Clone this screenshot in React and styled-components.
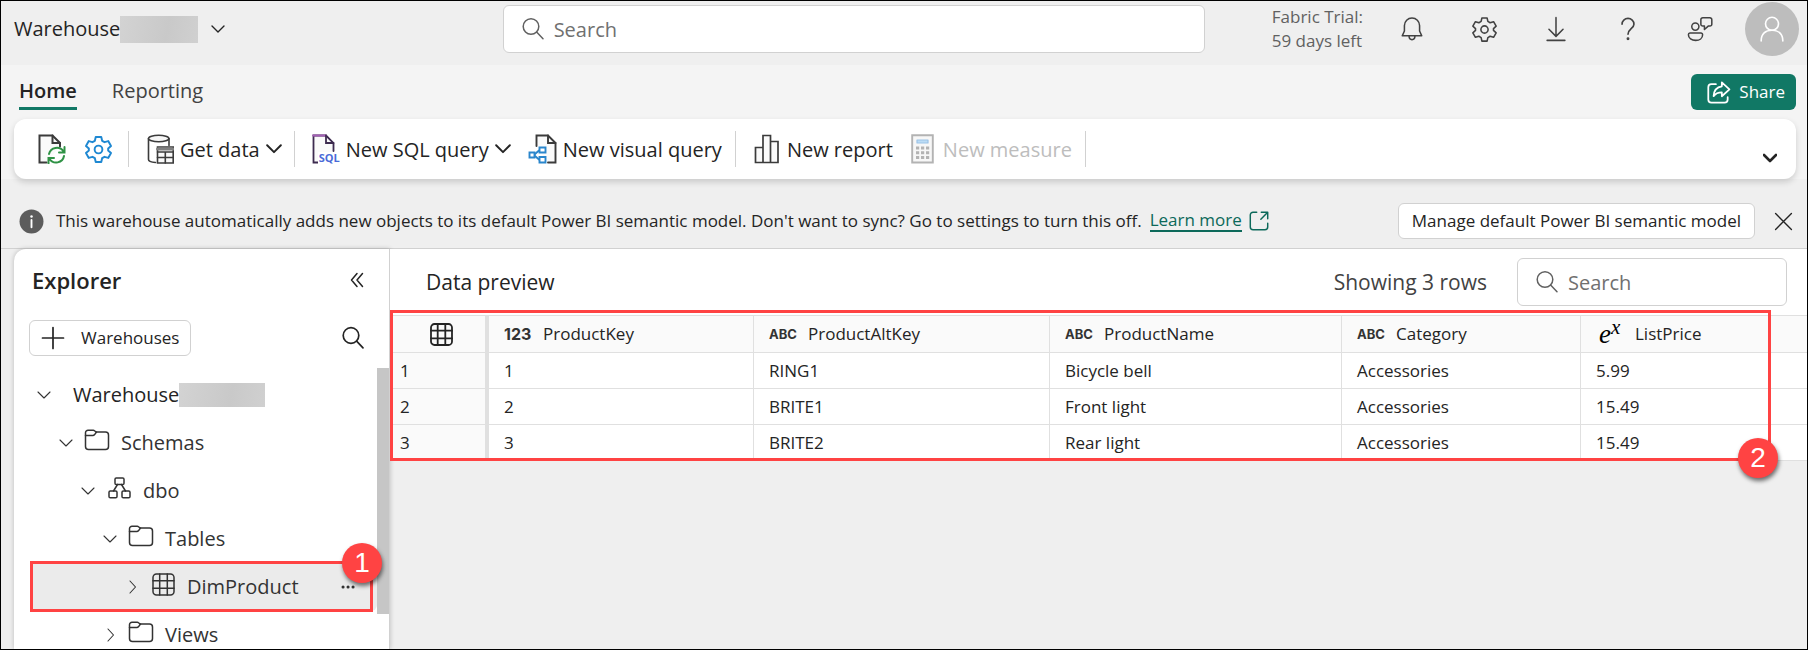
import React from "react";
import styled, { createGlobalStyle, css } from "styled-components";

const GlobalStyle = createGlobalStyle`
  *, *::before, *::after { box-sizing: border-box; }
  body {
    margin: 0;
    background: #efefef;
    color: #242424;
    font-family: "Open Sans", "Noto Sans", sans-serif;
    font-size: 17px;
    line-height: 24px;
  }
  button, input { font: inherit; color: inherit; }
  button { background: none; border: 0; padding: 0; margin: 0; white-space: nowrap; }
  ul { list-style: none; margin: 0; padding: 0; }
  svg { display: block; flex: none; }
`;

const Page = styled.div`
  display: flex;
  flex-direction: column;
  height: 100vh;
  border: 1px solid #000;
  overflow: hidden;
  background: #efefef;
`;

/* ---------- top bar ---------- */

const TopBar = styled.header`
  display: grid;
  grid-template-columns: 5fr 7fr 6fr;
  align-items: center;
  flex: none;
  padding: 1px 0 9px;
`;

const WorkspaceButton = styled.button`
  display: flex;
  align-items: center;
  justify-self: start;
  margin-left: 13px;
  font-size: 20px;
  line-height: 28px;
`;

const Redacted = styled.span`
  width: ${(p) => p.$width}px;
  height: ${(p) => p.$height}px;
  margin-right: 13px;
  background: linear-gradient(100deg, #d3d3d3, #c9c9c9 60%, #d0d0d0);
`;

const SearchBox = styled.label`
  display: flex;
  align-items: center;
  gap: 9px;
  height: 48px;
  width: ${(p) => p.$width};
  padding: 0 17px;
  background: #fff;
  border: 1px solid #d1d1d1;
  border-radius: 6px;
  color: #616161;

  input {
    flex: 1;
    min-width: 0;
    border: 0;
    padding: 2px 0 0;
    outline: 0;
    background: transparent;
    font-size: 20px;
  }
  input::placeholder { color: #707070; opacity: 1; }
`;

const TopActions = styled.div`
  display: flex;
  align-items: center;
  justify-content: flex-end;
  padding-right: 8px;
`;

const Trial = styled.div`
  margin-right: 13px;
  color: #616161;
  line-height: 24px;
  white-space: nowrap;
`;

const TopIcon = styled.button`
  display: flex;
  justify-content: center;
  width: 72px;
  color: #424242;
`;

const Avatar = styled.button`
  display: flex;
  align-items: center;
  justify-content: center;
  width: 54px;
  height: 54px;
  margin-left: 9px;
  border-radius: 50%;
  background: #bdbdbd;
  color: #fff;
`;

/* ---------- ribbon ---------- */

const Ribbon = styled.section`
  flex: none;
  padding: 0 11px 0 13px;
  background: #f4f4f4;
`;

const TabRow = styled.nav`
  display: flex;
  align-items: flex-start;
  height: 54px;
  padding: 9px 0 0 5px;
`;

const Tab = styled.button`
  height: 36px;
  margin-right: 35px;
  color: ${(p) => (p.$active ? "#242424" : "#424242")};
  font-size: 20px;
  font-weight: ${(p) => (p.$active ? 600 : 400)};
  line-height: 30px;
  border-bottom: 3px solid ${(p) => (p.$active ? "#117865" : "transparent")};
`;

const ShareButton = styled.button`
  display: flex;
  align-items: center;
  gap: 8px;
  height: 36px;
  margin-left: auto;
  padding: 0 11px 0 15px;
  border-radius: 6px;
  background: #117865;
  color: #fff;
`;

const Toolbar = styled.div`
  display: flex;
  align-items: center;
  height: 60px;
  padding: 0 19px 0 24px;
  background: #fff;
  border-radius: 12px;
  box-shadow: 0 3px 6px rgba(0, 0, 0, 0.16);
`;

const Tool = styled.button`
  display: flex;
  align-items: center;
  gap: ${(p) => p.$gap || 6}px;
  margin-right: ${(p) => p.$after}px;
  font-size: 20px;
  line-height: 28px;
  color: #242424;
  &:disabled { color: #bdbdbd; }
`;

const ToolLabel = styled.span`
  padding-top: 2px;
`;

const Divider = styled.span`
  width: 1px;
  height: 36px;
  margin-right: ${(p) => p.$after}px;
  background: #d1d1d1;
`;

const Expand = styled.button`
  margin: 18px 0 0 auto;
`;

/* ---------- message bar ---------- */

const MessageBar = styled.div`
  display: flex;
  align-items: center;
  flex: none;
  padding: 24px 14px 9px 18px;
  border-bottom: 1px solid #d1d1d1;
  white-space: nowrap;
`;

const Message = styled.p`
  margin: 0 0 0 12px;
`;

const LearnMore = styled.a`
  display: flex;
  align-items: center;
  gap: 6px;
  margin-left: 8px;
  color: #0c695a;
  text-decoration: none;
  span { line-height: 20px; border-bottom: 2px solid #0c695a; }
`;

const OutlineButton = styled.button`
  display: flex;
  align-items: center;
  gap: 16px;
  height: 36px;
  padding: 0 ${(p) => p.$pad || 13}px;
  background: #fff;
  border: 1px solid #d1d1d1;
  border-radius: 6px;
`;

const BarEnd = styled.div`
  display: flex;
  align-items: center;
  gap: 19px;
  margin-left: auto;
`;

/* ---------- explorer ---------- */

const Body = styled.div`
  display: flex;
  flex: 1;
  min-height: 0;
  padding-left: 13px;
`;

const Explorer = styled.aside`
  display: flex;
  flex-direction: column;
  flex: none;
  width: 376px;
  background: #fff;
  border-right: 1px solid #d1d1d1;
  border-top-left-radius: 12px;
  box-shadow: 0 0 5px rgba(0, 0, 0, 0.22);
`;

const ExplorerHead = styled.div`
  display: flex;
  align-items: center;
  justify-content: space-between;
  height: 62px;
  padding: 0 25px 0 18px;
`;

const ExplorerTitle = styled.h2`
  margin: 0;
  font-size: 22px;
  font-weight: 600;
`;

const ExplorerActions = styled.div`
  display: flex;
  align-items: center;
  justify-content: space-between;
  padding: 9px 24px 12px 15px;
`;

const TreeArea = styled.div`
  display: flex;
  flex: 1;
  min-height: 0;
`;

const Tree = styled.ul`
  flex: 1;
  padding: 3px 0 0 16px;
`;

const TreeItem = styled.li`
  position: relative;
  display: flex;
  align-items: center;
  height: 48px;
  padding-left: ${(p) => 5 + p.$level * 22}px;
  font-size: 20px;
  color: #333;
  ${(p) =>
    p.$selected &&
    css`
      background: #ebebeb;
      border-radius: 6px;
    `}
`;

const Twisty = styled.button`
  display: flex;
  justify-content: center;
  width: 18px;
  margin-right: ${(p) => (p.$bare ? 20 : 10)}px;
`;

const NodeIcon = styled.span`
  display: flex;
  justify-content: center;
  width: 24px;
  margin-right: 12px;
  padding-bottom: 6px;
`;

const Strong = styled.span`
  font-weight: 500;
  color: #242424;
`;

const More = styled.button`
  margin: 0 22px 0 auto;
`;

const Thumb = styled.div`
  width: 12px;
  height: 246px;
  background: #c6c6c6;
`;

/* ---------- numbered highlights ---------- */

const Highlight = styled.div`
  position: absolute;
  inset: ${(p) => p.$inset};
  border: 3px solid #ff4343;
  pointer-events: none;
`;

const Badge = styled.span`
  position: absolute;
  top: ${(p) => p.$top};
  bottom: ${(p) => p.$bottom};
  right: ${(p) => p.$right};
  display: flex;
  align-items: center;
  justify-content: center;
  width: 40px;
  height: 40px;
  border-radius: 50%;
  background: #ff4343;
  color: #fff;
  font: 28px/40px "Liberation Sans", sans-serif;
  box-shadow: 1px 3px 4px rgba(0, 0, 0, 0.55);
`;

/* ---------- data preview ---------- */

const Main = styled.main`
  flex: 1;
  min-width: 0;
`;

const PreviewHead = styled.div`
  display: flex;
  align-items: center;
  height: 66px;
  padding: 0 20px 0 36px;
  background: #fff;
`;

const PreviewTitle = styled.h2`
  margin: 0 auto 0 0;
  font-size: 21px;
  font-weight: 400;
  line-height: 28px;
`;

const RowCount = styled.span`
  margin-right: 30px;
  font-size: 21px;
  line-height: 28px;
  color: #424242;
`;

const TableWrap = styled.div`
  position: relative;
`;

const DataTable = styled.table`
  width: 100%;
  table-layout: fixed;
  border-collapse: separate;
  border-spacing: 0;
  background: #fff;

  th, td {
    height: 36px;
    padding: 1px 0 0 15px;
    border-bottom: 1px solid #e0e0e0;
    border-right: 1px solid #e0e0e0;
    text-align: left;
    font-weight: 400;
    line-height: 24px;
    white-space: nowrap;
  }
  th:last-child, td:last-child { border-right: 0; }
  thead th {
    height: 38px;
    padding-top: 0;
    border-top: 1px solid #e0e0e0;
    background: #fafafa;
  }
  tr > :first-child {
    padding-left: 10px;
    border-right: 4px solid #e0e0e0;
    background: #fafafa;
  }
`;

const ColumnHead = styled.div`
  display: flex;
  align-items: center;
  gap: 11px;
`;

const TypeMark = styled.span`
  min-width: 28px;
  color: #333;
  font: 700 ${(p) => p.$size}px/22px Inter, sans-serif;
`;

const RealMark = styled.span`
  width: 25px;
  margin-left: 3px;
  color: #000;
  font: italic 27px/24px "Liberation Serif", serif;
  sup { font-size: 21px; line-height: 0; vertical-align: 9px; }
`;

const GridCorner = styled.div`
  display: flex;
  justify-content: center;
  padding-right: 2px;
`;

/* ---------- icons ---------- */

const Svg = ({ size = 24, w, h, box = "0 0 24 24", stroke = 1.4, color = "currentColor", children }) => (
  <svg
    width={w || size}
    height={h || size}
    viewBox={box}
    fill="none"
    stroke={color}
    strokeWidth={stroke}
    strokeLinecap="round"
    strokeLinejoin="round"
    aria-hidden="true"
  >
    {children}
  </svg>
);

const ChevronDown = ({ w = 14, stroke = 1.4 }) => (
  <Svg w={w} h={(w * 10) / 14} box="0 0 14 10" stroke={stroke}>
    <path d="M1 2l6 6 6-6" />
  </Svg>
);

const ChevronRight = () => (
  <Svg w={9} h={14} box="0 0 9 14" stroke={1.1}>
    <path d="M2 1l5.500 6L2 13" />
  </Svg>
);

const SearchIcon = ({ stroke = 1.5 }) => (
  <Svg stroke={stroke}>
    <circle cx="10" cy="9.500" r="7.800" />
    <path d="M15.600 15.100l6.400 6.700" />
  </Svg>
);

const BellIcon = () => (
  <Svg size={26}>
    <path d="M12 1.800a7 7 0 0 0-7 7v5L3 18.300h18l-2-4.500v-5a7 7 0 0 0-7-7z" />
    <path d="M9.300 18.500a2.700 3.300 0 0 0 5.400 0" />
  </Svg>
);

const gearPath =
  "M9.700 1.700h4.600l.7 3.100 2 1.150 3.050-.9 2.300 4-2.350 2.150v1.600l2.350 2.150-2.300 4-3.050-.9-2 1.150-.7 3.100H9.700L9 19.200l-2-1.150-3.050.9-2.300-4L4 12.800v-1.600L1.650 9.050l2.300-4L7 5.950l2-1.150z";

const GearIcon = ({ size = 27, stroke = 1.4 }) => (
  <Svg size={size} stroke={stroke} box="0 0 24 24">
    <path d={gearPath} />
    <circle cx="12" cy="12" r="3.200" />
  </Svg>
);

const DownloadIcon = () => (
  <Svg size={26}>
    <path d="M12 1.500v17M5.500 12.300l6.500 6.500 6.500-6.500M3.800 22.500h16.400" />
  </Svg>
);

const HelpIcon = () => (
  <Svg size={26} stroke={1.500}>
    <path d="M6.500 7.500a5.500 5.300 0 0 1 11 0c0 4-5.500 4.600-5.500 9.300" />
    <circle cx="12" cy="21" r=".6" fill="currentColor" />
  </Svg>
);

const FeedbackIcon = () => (
  <Svg size={26}>
    <circle cx="7.700" cy="9.800" r="3.300" />
    <path d="M2.700 15.700h10.200a1.500 1.500 0 0 1 1.500 1.500c0 3.300-2.800 5.300-6.400 5.300s-6.700-2-6.700-5.300a1.500 1.500 0 0 1 1.400-1.500z" />
    <path d="M14.500 1.700h6.700a1.700 1.700 0 0 1 1.700 1.700v4.200a1.700 1.700 0 0 1-1.700 1.700h-1.600l-3.500 3.200V9.300h-1.600a1.700 1.700 0 0 1-1.700-1.700V3.400a1.700 1.700 0 0 1 1.700-1.700z" />
  </Svg>
);

const PersonIcon = () => (
  <Svg size={26} stroke={1.500}>
    <circle cx="12" cy="7.200" r="6" />
    <path d="M2 23c0-6.500 4-9.800 10-9.800S22 16.500 22 23" />
  </Svg>
);

const ShareIcon = () => (
  <Svg size={25} stroke={1.700}>
    <path d="M9.500 4H5.200A3 3 0 0 0 2.200 7v11.800a3 3 0 0 0 3 3h12.600a3 3 0 0 0 3-3v-2.300" />
    <path d="M15.200 2.200l7.300 6.800-7.300 6.600v-3.700c-3.700 0-6 1-7.900 3.600.3-5.200 3-8.800 7.900-9.400z" />
  </Svg>
);

const RefreshDocIcon = () => (
  <Svg w={28} h={30} box="0 0 28 30" stroke={2} color="#3b3b3b">
    <path d="M8.500 28.500H1.500v-27h13L22 9v3.500" fill="#fafafa" strokeLinejoin="miter" />
    <path d="M14.500 1.500V9H22" strokeLinejoin="miter" />
    <g stroke="#2f9245">
      <path d="M11 20a8 8 0 0 1 14.500-2.500M26.500 13v5.500H21M26 22a8 8 0 0 1-14.500 3M10.500 29.500V24H16" strokeLinejoin="miter" />
    </g>
  </Svg>
);

const DatabaseIcon = () => (
  <Svg w={27} h={30} box="0 0 27 30" stroke={1.600} color="#3b3b3b">
    <path d="M1.500 4.500v21c0 1.500 3 2.700 7 3M22 4.500v7" fill="none" />
    <ellipse cx="11.700" cy="4.500" rx="10.200" ry="3.300" fill="#f7f7f7" />
    <g strokeLinejoin="miter">
      <path d="M10.500 13h15.700v16H10.500z" fill="#fafafa" />
      <path d="M10.500 15h15.700" stroke="#808080" strokeWidth="3" />
      <path d="M10.500 18h15.700M10.500 23.500h15.700M18.300 18v11" />
    </g>
  </Svg>
);

const SqlMark = styled.span`
  position: relative;
  display: block;
  width: 28px;
  height: 30px;
  b {
    position: absolute;
    right: 0;
    bottom: 0;
    padding-left: 1px;
    background: #fff;
    color: #4a6bd8;
    font: 700 11px/12px "Open Sans", sans-serif;
  }
`;

const SqlIcon = () => (
  <SqlMark>
    <Svg w={28} h={30} box="0 0 28 30" stroke={1.800} color="#3d2b4f">
      <path d="M7 28.500H1.500v-27H14L21.500 9v8" fill="#fafafa" strokeLinejoin="miter" />
      <path d="M1 1.500h13" stroke="#a45fb5" />
      <path d="M14 1.500V9h7.500" strokeLinejoin="miter" />
    </Svg>
    <b>SQL</b>
  </SqlMark>
);

const VisualIcon = () => (
  <Svg w={29} h={30} box="0 0 29 30" stroke={1.900} color="#3b3b3b">
    <g strokeLinejoin="miter">
      <path d="M8.500 12V1.500H20L27.500 9v19.500H20" fill="#fafafa" />
      <path d="M20 1.500V9h7.500" />
      <g stroke="#2a86cc">
        <path d="M7 20l4-3.500M7 22l4 3.500" />
        <path d="M1.500 18.500h5v5h-5zM11.500 13.500h6v5h-6zM11.500 23h6v5.500h-6z" fill="#fff" />
      </g>
    </g>
  </Svg>
);

const ReportIcon = () => (
  <Svg w={26} h={30} box="0 0 26 30" stroke={1.700} color="#3b3b3b">
    <path d="M1.500 13.500H9v15H1.500zM9 1.500h7.500v27H9zM16.500 7.500H24v21h-7.500z" fill="#fafafa" strokeLinejoin="miter" />
  </Svg>
);

const CalculatorIcon = () => (
  <Svg w={23} h={30} box="0 0 23 30" stroke={1.900} color="#b3b3b3">
    <path d="M1.200 1.200h20.600v27.300H1.200z" fill="#f7f7f7" strokeLinejoin="miter" />
    <path d="M6 6h11v3H6z" fill="#bcdcf5" stroke="#9cc3e8" strokeWidth="1.200" />
    <path d="M5 14h3.200m1.800 0h3.200m1.800 0h3.200M5 18.800h3.200m1.800 0h3.200m1.800 0h3.200M5 23.600h3.200m1.800 0h3.200m1.800 0h3.200" strokeWidth="3" strokeLinecap="butt" />
  </Svg>
);

const InfoIcon = () => (
  <svg width="25" height="25" viewBox="0 0 24 24" aria-hidden="true">
    <circle cx="12" cy="12" r="11.500" fill="#5c5c5c" />
    <path d="M12 10.500v7" stroke="#fff" strokeWidth="1.800" strokeLinecap="round" />
    <circle cx="12" cy="7.200" r="1.200" fill="#fff" />
  </svg>
);

const OpenIcon = () => (
  <Svg size={22} stroke={1.600}>
    <path d="M9.500 2.500h-4a3 3 0 0 0-3 3v13a3 3 0 0 0 3 3h13a3 3 0 0 0 3-3v-4M14.500 2.500h7v7M21.500 2.500l-7.500 7.500" />
  </Svg>
);

const CloseIcon = () => (
  <Svg size={19} stroke={1.700}>
    <path d="M2 2l20 20M22 2L2 22" />
  </Svg>
);

const CollapseIcon = () => (
  <Svg w={14} h={16} box="0 0 14 16" stroke={1.500}>
    <path d="M7 1.500L1.500 8 7 14.500M12.500 1.500L7 8l5.500 6.500" />
  </Svg>
);

const PlusIcon = () => (
  <Svg size={24} stroke={1.700}>
    <path d="M12 1.500v21M1.500 12h21" />
  </Svg>
);

const FolderIcon = () => (
  <Svg w={26} h={22} box="0 0 26 22" stroke={1.500}>
    <path d="M1.500 5.500V17.500a3 3 0 0 0 3 3h17a3 3 0 0 0 3-3V6a3 3 0 0 0-3-3H12L10.500 1.700a2 2 0 0 0-1.200-.5H4a2.500 2.500 0 0 0-2.500 2.500z" />
    <path d="M1.500 6.500h7.300c.8 0 1.300-.3 1.800-.9L12.500 3" />
  </Svg>
);

const SchemaIcon = () => (
  <Svg w={23} h={22} box="0 0 23 22" stroke={1.500}>
    <rect x="7" y="1" width="9" height="6.500" rx="1.300" />
    <rect x="1" y="14" width="8" height="6.800" rx="1.300" />
    <rect x="14" y="14" width="8" height="6.800" rx="1.300" />
    <path d="M9.500 7.500L5.500 14M13.500 7.500l4 6.500" />
  </Svg>
);

const GridIcon = ({ stroke = 1.500 }) => (
  <Svg w={23} h={23} box="0 0 23 23" stroke={stroke}>
    <rect x="1" y="1" width="21" height="21" rx="3.500" />
    <path d="M1 7.700h21M1 15.300h21M7.700 1v21M15.300 1v21" />
  </Svg>
);

const MoreIcon = () => (
  <Svg w={14} h={4} box="0 0 14 4">
    <path d="M2 2h.1M7 2h.1M12 2h.1" strokeWidth="3" />
  </Svg>
);

/* ---------- data ---------- */

const treeNodes = [
  { label: "Warehouse", level: 0, open: true, root: true },
  { label: "Schemas", level: 1, open: true, icon: <FolderIcon /> },
  { label: "dbo", level: 2, open: true, icon: <SchemaIcon /> },
  { label: "Tables", level: 3, open: true, icon: <FolderIcon /> },
  { label: "DimProduct", level: 4, icon: <GridIcon />, selected: true },
  { label: "Views", level: 3, icon: <FolderIcon /> },
];

const columns = [
  { name: "ProductKey", mark: "123", size: 16, width: 265 },
  { name: "ProductAltKey", mark: "ABC", size: 13, width: 296 },
  { name: "ProductName", mark: "ABC", size: 13, width: 292 },
  { name: "Category", mark: "ABC", size: 13, width: 239 },
  { name: "ListPrice", mark: "real" },
];

const rows = [
  ["1", "RING1", "Bicycle bell", "Accessories", "5.99"],
  ["2", "BRITE1", "Front light", "Accessories", "15.49"],
  ["3", "BRITE2", "Rear light", "Accessories", "15.49"],
];

const topIcons = [
  ["Notifications", <BellIcon />],
  ["Settings", <GearIcon />],
  ["Downloads", <DownloadIcon />],
  ["Help", <HelpIcon />],
  ["Feedback", <FeedbackIcon />],
];

const Blue = styled.span`
  color: #1e88d2;
`;

export default function App() {
  return (
    <Page>
      <GlobalStyle />
      <TopBar>
        <WorkspaceButton>
          Warehouse
          <Redacted $width={78} $height={27} />
          <ChevronDown />
        </WorkspaceButton>
        <SearchBox $width="100%">
          <SearchIcon />
          <input type="search" placeholder="Search" aria-label="Search" />
        </SearchBox>
        <TopActions>
          <Trial>
            Fabric Trial:
            <br />
            59 days left
          </Trial>
          {topIcons.map(([label, icon]) => (
            <TopIcon key={label} aria-label={label}>
              {icon}
            </TopIcon>
          ))}
          <Avatar aria-label="Account">
            <PersonIcon />
          </Avatar>
        </TopActions>
      </TopBar>

      <Ribbon>
        <TabRow>
          <Tab $active>Home</Tab>
          <Tab>Reporting</Tab>
          <ShareButton>
            <ShareIcon />
            Share
          </ShareButton>
        </TabRow>
        <Toolbar>
          <Tool $after={18} aria-label="Refresh">
            <RefreshDocIcon />
          </Tool>
          <Tool $after={15} aria-label="Warehouse settings">
            <Blue>
              <GearIcon size={29} stroke={1.6} />
            </Blue>
          </Tool>
          <Divider $after={18} />
          <Tool $after={12}>
            <DatabaseIcon />
            <ToolLabel>Get data</ToolLabel>
            <ChevronDown w={16} stroke={1.7} />
          </Tool>
          <Divider $after={17} />
          <Tool $after={17}>
            <SqlIcon />
            <ToolLabel>New SQL query</ToolLabel>
            <ChevronDown w={16} stroke={1.7} />
          </Tool>
          <Tool $after={13}>
            <VisualIcon />
            <ToolLabel>New visual query</ToolLabel>
          </Tool>
          <Divider $after={18} />
          <Tool $after={18} $gap={7}>
            <ReportIcon />
            <ToolLabel>New report</ToolLabel>
          </Tool>
          <Tool $after={13} $gap={9} disabled>
            <CalculatorIcon />
            <ToolLabel>New measure</ToolLabel>
          </Tool>
          <Divider $after={0} />
          <Expand aria-label="Expand ribbon">
            <ChevronDown w={14} stroke={2.6} />
          </Expand>
        </Toolbar>
      </Ribbon>

      <MessageBar>
        <InfoIcon />
        <Message>
          This warehouse automatically adds new objects to its default Power BI semantic model. Don't want to sync? Go to
          settings to turn this off.
        </Message>
        <LearnMore href="#learn-more">
          <span>Learn more</span>
          <OpenIcon />
        </LearnMore>
        <BarEnd>
          <OutlineButton>Manage default Power BI semantic model</OutlineButton>
          <button aria-label="Dismiss">
            <CloseIcon />
          </button>
        </BarEnd>
      </MessageBar>

      <Body>
        <Explorer>
          <ExplorerHead>
            <ExplorerTitle>Explorer</ExplorerTitle>
            <button aria-label="Collapse explorer">
              <CollapseIcon />
            </button>
          </ExplorerHead>
          <ExplorerActions>
            <OutlineButton $pad={11}>
              <PlusIcon />
              Warehouses
            </OutlineButton>
            <button aria-label="Search explorer">
              <SearchIcon stroke={1.7} />
            </button>
          </ExplorerActions>
          <TreeArea>
            <Tree>
              {treeNodes.map((n) => (
                <TreeItem key={n.label} $level={n.level} $selected={n.selected}>
                  <Twisty $bare={n.root} aria-label={`Toggle ${n.label}`}>
                    {n.open ? <ChevronDown w={14} stroke={1.1} /> : <ChevronRight />}
                  </Twisty>
                  {n.icon && <NodeIcon>{n.icon}</NodeIcon>}
                  {n.root ? <Strong>{n.label}</Strong> : n.label}
                  {n.root && <Redacted $width={86} $height={24} />}
                  {n.selected && (
                    <>
                      <More aria-label="More options">
                        <MoreIcon />
                      </More>
                      <Highlight $inset="-2px 4px -1px 0" />
                      <Badge $top="-20px" $right="-5px">
                        1
                      </Badge>
                    </>
                  )}
                </TreeItem>
              ))}
            </Tree>
            <Thumb />
          </TreeArea>
        </Explorer>

        <Main>
          <PreviewHead>
            <PreviewTitle>Data preview</PreviewTitle>
            <RowCount>Showing 3 rows</RowCount>
            <SearchBox $width="270px">
              <SearchIcon />
              <input type="search" placeholder="Search" aria-label="Search rows" />
            </SearchBox>
          </PreviewHead>
          <TableWrap>
            <DataTable>
              <colgroup>
                <col width="99" />
                {columns.map((c) => (
                  <col key={c.name} width={c.width} />
                ))}
              </colgroup>
              <thead>
                <tr>
                  <th aria-label="Row">
                    <GridCorner>
                      <GridIcon stroke={1.8} />
                    </GridCorner>
                  </th>
                  {columns.map((c) => (
                    <th key={c.name} scope="col">
                      <ColumnHead>
                        {c.mark === "real" ? (
                          <RealMark>
                            e<sup>x</sup>
                          </RealMark>
                        ) : (
                          <TypeMark $size={c.size}>{c.mark}</TypeMark>
                        )}
                        {c.name}
                      </ColumnHead>
                    </th>
                  ))}
                </tr>
              </thead>
              <tbody>
                {rows.map((r, i) => (
                  <tr key={r[0]}>
                    <th scope="row">{i + 1}</th>
                    {r.map((v, j) => (
                      <td key={j}>{v}</td>
                    ))}
                  </tr>
                ))}
              </tbody>
            </DataTable>
            <Highlight $inset="-5px 36px 0 0" />
            <Badge $bottom="-17px" $right="29px">
              2
            </Badge>
          </TableWrap>
        </Main>
      </Body>
    </Page>
  );
}
